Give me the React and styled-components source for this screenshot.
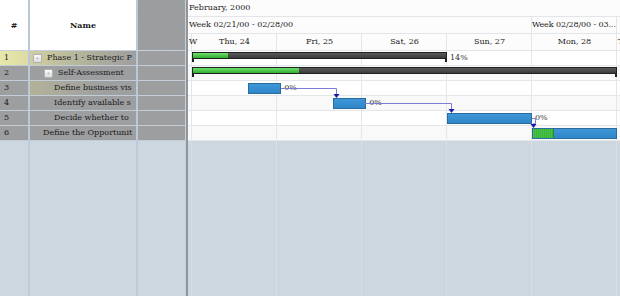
import React from "react";
import styled, { createGlobalStyle } from "styled-components";

const DAY = 85;
const LEAD = 4; // visible part of Wed, 23
const ROW_H = 15;

const GlobalStyle = createGlobalStyle`
  html, body {
    margin: 0;
    padding: 0;
    background: #fff;
  }
  * { box-sizing: border-box; }
`;

const tasks = [
  { id: 1, name: "Phase 1 - Strategic P", indent: 3, toggle: true, type: "summary", start: 0, end: 3, done: 0.14, label: "14%", hl: "full" },
  { id: 2, name: "Self-Assessment", indent: 14, toggle: true, type: "summary", start: 0, end: 5, done: 0.25, label: "" },
  { id: 3, name: "Define business vis", indent: 24, type: "task", start: 0.66, end: 1.05, done: 0, label: "0%", hl: "soft" },
  { id: 4, name: "Identify available s", indent: 24, type: "task", start: 1.66, end: 2.05, done: 0, label: "0%" },
  { id: 5, name: "Decide whether to", indent: 24, type: "task", start: 3, end: 4, done: 0, label: "0%" },
  { id: 6, name: "Define the Opportunit", indent: 13, type: "task", start: 4, end: 5, done: 0.25, label: "" },
];

const days = ["Thu, 24", "Fri, 25", "Sat, 26", "Sun, 27", "Mon, 28"];

const x = (d) => LEAD + d * DAY;

export default function App() {
  return (
    <>
      <GlobalStyle />
      <Gantt>
        <Grid>
          <GridHeader>
            <HeadCell>#</HeadCell>
            <HeadCell>Name</HeadCell>
            <HatchCell />
          </GridHeader>
          {tasks.map((t) => (
            <GridRow key={t.id}>
              <NumCell $hl={t.hl === "full"}>{t.id}</NumCell>
              <NameCell $hl={t.hl} style={{ paddingLeft: t.indent }}>
                {t.toggle && <Toggle>-</Toggle>}
                <span>{t.name}</span>
              </NameCell>
              <GrayCell />
            </GridRow>
          ))}
          <GridFiller>
            <div />
            <div />
            <div />
          </GridFiller>
        </Grid>
        <Splitter />
        <Chart>
          <ScaleRow>
            <ScaleCell $w={600}>February, 2000</ScaleCell>
          </ScaleRow>
          <ScaleRow>
            <ScaleCell $w={LEAD + 4 * DAY} $line>Week 02/21/00 - 02/28/00</ScaleCell>
            <ScaleCell $w={DAY} $line $tight>Week 02/28/00 - 03...</ScaleCell>
            <ScaleCell $w={DAY} />
          </ScaleRow>
          <ScaleRow>
            <ScaleCell $w={LEAD} $line $spill>W</ScaleCell>
            {days.map((d) => (
              <ScaleCell key={d} $w={DAY} $line $center>{d}</ScaleCell>
            ))}
            <ScaleCell $w={DAY}>T</ScaleCell>
          </ScaleRow>
          <Body>
            {tasks.map((t, i) => (
              <ChartRow key={t.id} $alt={i % 2 === 1}>
                <DayLines />
                {t.type === "summary" ? (
                  <SummaryBar style={{ left: x(t.start), width: x(t.end) - x(t.start) }}>
                    <Progress style={{ width: `${t.done * 100}%` }} />
                  </SummaryBar>
                ) : (
                  <TaskBar style={{ left: x(t.start), width: x(t.end) - x(t.start) }}>
                    {t.done > 0 && <TaskProgress style={{ width: `${t.done * 100}%` }} />}
                  </TaskBar>
                )}
                {t.label && (
                  <BarLabel style={{ left: x(t.end) + 3 }}>{t.label}</BarLabel>
                )}
              </ChartRow>
            ))}
            <Filler>
              <DayLines $dim />
            </Filler>
            <Links width="432" height="90">
              <g stroke="#7d7dd6" strokeWidth="1" fill="none">
                <polyline points="93,37.5 148.5,37.5 148.5,44" />
                <polyline points="177,52.5 263.5,52.5 263.5,59" />
                <polyline points="344,67.5 347.5,67.5 347.5,72.5 345.5,72.5 345.5,74" />
              </g>
              <g fill="#1b1ba8">
                <path d="M145.5 43 L151.5 43 L148.5 47 Z" />
                <path d="M260.5 58 L266.5 58 L263.5 62 Z" />
                <path d="M342.5 73 L348.5 73 L345.5 77 Z" />
              </g>
            </Links>
          </Body>
        </Chart>
      </Gantt>
    </>
  );
}

function DayLines({ $dim }) {
  return (
    <Lines>
      <DayCol $w={LEAD} $dim={$dim} />
      {days.map((d) => (
        <DayCol key={d} $w={DAY} $dim={$dim} />
      ))}
      <DayCol $w={DAY} $dim={$dim} />
    </Lines>
  );
}

const Gantt = styled.div`
  display: flex;
  width: 620px;
  height: 296px;
  overflow: hidden;
  font-family: "DejaVu Serif", "Liberation Serif", serif;
  font-size: 8px;
  color: #1a1a1a;
  background: #cdd7e0;
`;

const Grid = styled.div`
  width: 185px;
  display: flex;
  flex-direction: column;
`;

const cols = `grid-template-columns: 30px 108px 47px;`;

const GridHeader = styled.div`
  display: grid;
  ${cols}
  height: 51px;
  border-bottom: 1px solid #c4d0dc;
`;

const HeadCell = styled.div`
  display: flex;
  align-items: center;
  justify-content: center;
  background: #fff;
  font-weight: bold;
  border-right: 2px solid #b9c9d8;
`;

const HatchCell = styled.div`
  background: repeating-linear-gradient(45deg, #999c9e 0 1px, #9c9ea0 1px 3px);
`;

const GridRow = styled.div`
  display: grid;
  ${cols}
  height: ${ROW_H}px;
  border-bottom: 1px solid #c3cdd8;
  line-height: 14px;
`;

const NumCell = styled.div`
  padding-left: 4px;
  border-right: 2px solid #b9c9d8;
  background: ${(p) => (p.$hl ? "linear-gradient(90deg, #e8e7ab, #dddca4)" : "#9d9ea0")};
`;

const NameCell = styled.div`
  display: flex;
  align-items: center;
  gap: 5px;
  white-space: nowrap;
  overflow: hidden;
  border-right: 2px solid #b9c9d8;
  background: ${(p) =>
    p.$hl === "full"
      ? "linear-gradient(90deg, #d0cfa2, #b0b09c 55%, #9e9fa0)"
      : p.$hl === "soft"
      ? "linear-gradient(90deg, #b2b29a, #9e9fa0 70%)"
      : "#9d9ea0"};
`;

const Toggle = styled.span`
  flex: none;
  width: 9px;
  height: 9px;
  display: flex;
  align-items: center;
  justify-content: center;
  font-size: 7px;
  line-height: 1;
  color: #444;
  background: linear-gradient(#fbfbfb, #dcdcdc);
  border: 1px solid #b0b0b0;
  border-radius: 1px;
`;

const GrayCell = styled.div`
  background: #9d9ea0;
`;

const GridFiller = styled.div`
  flex: 1;
  display: grid;
  ${cols}
  & > div:not(:last-child) {
    border-right: 2px solid #bccbd9;
  }
`;

const Splitter = styled.div`
  width: 3px;
  background: linear-gradient(90deg, #c8d0d8 0 1px, #8f969c 1px 3px);
`;

const Chart = styled.div`
  flex: 1;
  display: flex;
  flex-direction: column;
  overflow: hidden;
  background: #fff;
`;

const ScaleRow = styled.div`
  display: flex;
  height: 17px;
  border-bottom: 1px solid #e2e6eb;
  background: #fcfcfc;
  white-space: nowrap;
`;

const ScaleCell = styled.div`
  flex: none;
  width: ${(p) => p.$w}px;
  line-height: 16px;
  padding-left: ${(p) => (p.$tight ? 0 : 1)}px;
  letter-spacing: ${(p) => (p.$tight ? "-0.1px" : "normal")};
  text-align: ${(p) => (p.$center ? "center" : "left")};
  overflow: ${(p) => (p.$spill ? "visible" : "hidden")};
  position: ${(p) => (p.$spill ? "relative" : "static")};
  z-index: ${(p) => (p.$spill ? 1 : "auto")};
  background: ${(p) => (p.$spill ? "#fcfcfc" : "transparent")};
  border-right: ${(p) => (p.$line ? "1px solid #e2e6eb" : "none")};
`;

const Body = styled.div`
  position: relative;
  flex: 1;
  display: flex;
  flex-direction: column;
`;

const Lines = styled.div`
  position: absolute;
  inset: 0;
  display: flex;
`;

const DayCol = styled.div`
  flex: none;
  width: ${(p) => p.$w}px;
  border-right: 1px solid ${(p) => (p.$dim ? "#d6dde4" : "#e3e7ec")};
`;

const ChartRow = styled.div`
  position: relative;
  height: ${ROW_H}px;
  border-bottom: 1px solid #e3e7ec;
  background: ${(p) => (p.$alt ? "#f9f9f9" : "#fff")};
`;

const Filler = styled.div`
  position: relative;
  flex: 1;
  background: #cdd7e0;
`;

const SummaryBar = styled.div`
  position: absolute;
  top: 1px;
  height: 7px;
  background: linear-gradient(#5a5a5a, #3a3a3a);
  border: 1px solid #202020;
  &::before,
  &::after {
    content: "";
    position: absolute;
    top: 5px;
    width: 2px;
    height: 4px;
    background: #202020;
  }
  &::before { left: -1px; }
  &::after { right: -1px; }
`;

const Progress = styled.div`
  height: 100%;
  background: linear-gradient(#6fe06f, #2fae2f);
`;

const TaskBar = styled.div`
  position: absolute;
  top: 2px;
  height: 11px;
  background: linear-gradient(#3e97d8, #2f86c8);
  border: 1px solid #2a6c9e;
  overflow: hidden;
`;

const TaskProgress = styled.div`
  height: 100%;
  background: repeating-linear-gradient(90deg, #47c447 0 1px, #3bb33b 1px 2px);
  border-right: 1px solid #2a8a2a;
`;

const BarLabel = styled.span`
  position: absolute;
  top: 0;
  line-height: 14px;
  color: #333;
  white-space: nowrap;
`;

const Links = styled.svg`
  position: absolute;
  left: 0;
  top: 0;
  pointer-events: none;
`;
